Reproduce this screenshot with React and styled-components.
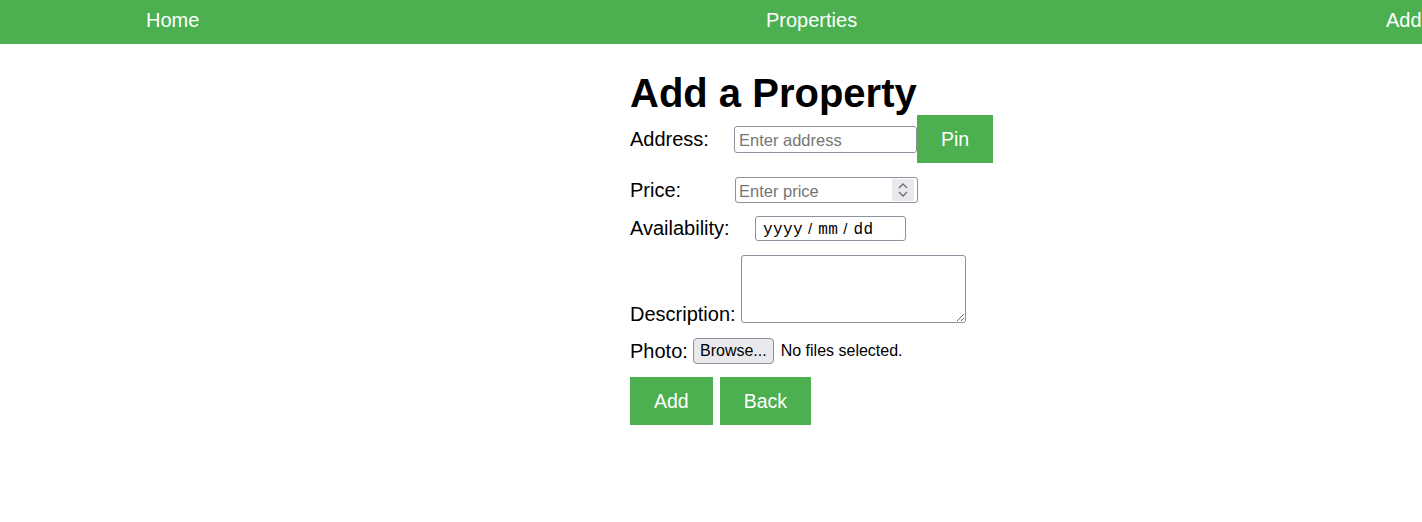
import React from "react";
import styled, { createGlobalStyle } from "styled-components";

const GlobalStyle = createGlobalStyle`
  body {
    margin: 0;
    background: #fff;
    font-family: "Liberation Sans", Arial, sans-serif;
    overflow: hidden;
  }
`;

const App = () => {
  return (
    <>
      <GlobalStyle />
      <Nav>
        <NavLink href="#">Home</NavLink>
        <NavLink href="#">Properties</NavLink>
        <NavLink href="#">Add</NavLink>
      </Nav>
      <Main>
        <Title>Add a Property</Title>
        <Row $h={48}>
          <Label $w={104}>Address:</Label>
          <TextInput type="text" placeholder="Enter address" />
          <GreenButton type="button">Pin</GreenButton>
        </Row>
        <Row $h={26} $mt={14}>
          <Label $w={105}>Price:</Label>
          <NumberField>
            <BareInput type="text" placeholder="Enter price" />
            <Spinner>
              <svg width="10" height="6" viewBox="0 0 10 6">
                <path d="M1 5 L5 1 L9 5" fill="none" stroke="#6b6b75" strokeWidth="1.3" />
              </svg>
              <svg width="10" height="6" viewBox="0 0 10 6">
                <path d="M1 1 L5 5 L9 1" fill="none" stroke="#6b6b75" strokeWidth="1.3" />
              </svg>
            </Spinner>
          </NumberField>
        </Row>
        <Row $h={25} $mt={13}>
          <Label $w={125}>Availability:</Label>
          <DateBox>
            <DatePart>yyyy</DatePart>
            <DateSep>/</DateSep>
            <DatePart>mm</DatePart>
            <DateSep>/</DateSep>
            <DatePart>dd</DatePart>
          </DateBox>
        </Row>
        <Row $h={68} $mt={14} $align="flex-end">
          <Label $w={111} $mb={-3}>Description:</Label>
          <TextArea />
        </Row>
        <Row $h={26} $mt={15}>
          <Label $w={63}>Photo:</Label>
          <BrowseButton type="button">Browse...</BrowseButton>
          <FileName>No files selected.</FileName>
        </Row>
        <Actions>
          <GreenButton type="button">Add</GreenButton>
          <GreenButton type="button">Back</GreenButton>
        </Actions>
      </Main>
    </>
  );
};

const Nav = styled.nav`
  display: flex;
  background: #4caf50;
  padding: 9px 0 12px 146px;
  overflow: hidden;
  white-space: nowrap;
`;

const NavLink = styled.a`
  flex: 0 0 620px;
  color: #fff;
  font-size: 20px;
  line-height: 23px;
  text-decoration: none;
`;

const Main = styled.main`
  padding-left: 630px;
`;

const Title = styled.h1`
  margin: 28px 0 0;
  font-size: 40px;
  line-height: 43px;
  font-weight: bold;
  color: #000;
`;

const Row = styled.div`
  display: flex;
  align-items: ${(p) => p.$align || "center"};
  height: ${(p) => p.$h}px;
  margin-top: ${(p) => p.$mt || 0}px;
`;

const Label = styled.label`
  flex: 0 0 ${(p) => p.$w}px;
  margin-bottom: ${(p) => p.$mb || 0}px;
  font-size: 20px;
  line-height: 23px;
  color: #000;
`;

const TextInput = styled.input`
  box-sizing: border-box;
  width: 183px;
  height: 27px;
  padding: 3px 4px 0;
  border: 1px solid #8f8f9d;
  border-radius: 3px;
  font-family: "Liberation Sans", Arial, sans-serif;
  font-size: 16.5px;
  outline: none;

  &::placeholder {
    color: #757575;
  }
`;

const NumberField = styled.div`
  box-sizing: border-box;
  display: flex;
  align-items: stretch;
  width: 183px;
  height: 26px;
  border: 1px solid #8f8f9d;
  border-radius: 3px;
`;

const BareInput = styled.input`
  flex: 1;
  min-width: 0;
  padding: 3px 3px 0;
  border: none;
  background: transparent;
  font-family: "Liberation Sans", Arial, sans-serif;
  font-size: 16.5px;
  outline: none;

  &::placeholder {
    color: #757575;
  }
`;

const Spinner = styled.div`
  display: flex;
  flex-direction: column;
  align-items: center;
  justify-content: center;
  gap: 2px;
  width: 22px;
  margin: 1px 3px 1px 0;
  background: #e9e9ed;
`;

const DateBox = styled.div`
  box-sizing: border-box;
  display: flex;
  align-items: baseline;
  width: 151px;
  height: 25px;
  padding: 1px 7px 0;
  border: 1px solid #8f8f9d;
  border-radius: 3px;
  line-height: 22px;
  color: #000;
  white-space: pre;
`;

const DatePart = styled.span`
  font-family: "Liberation Mono", "Courier New", monospace;
  font-size: 16px;
  letter-spacing: 0.4px;
`;

const DateSep = styled.span`
  padding: 0 6px 0 5px;
  font-family: "Liberation Sans", Arial, sans-serif;
  font-size: 15px;
`;

const TextArea = styled.textarea`
  box-sizing: border-box;
  width: 225px;
  height: 68px;
  border: 1px solid #8f8f9d;
  border-radius: 3px;
  font-family: "Liberation Mono", monospace;
  outline: none;
`;

const BrowseButton = styled.button`
  box-sizing: border-box;
  height: 26px;
  padding: 0 6px;
  border: 1px solid #8f8f9d;
  border-radius: 4px;
  background: #e9e9ed;
  color: #000;
  font-family: "Liberation Sans", Arial, sans-serif;
  font-size: 16px;
  line-height: 18px;
`;

const FileName = styled.span`
  margin-left: 7px;
  font-size: 16px;
  color: #000;
`;

const Actions = styled.div`
  display: flex;
  gap: 7px;
  margin-top: 13px;
`;

const GreenButton = styled.button`
  padding: 12px 24px;
  border: none;
  background: #4caf50;
  color: #fff;
  font-family: "Liberation Sans", Arial, sans-serif;
  font-size: 19.5px;
  line-height: 24px;
  cursor: pointer;
`;

export default App;
